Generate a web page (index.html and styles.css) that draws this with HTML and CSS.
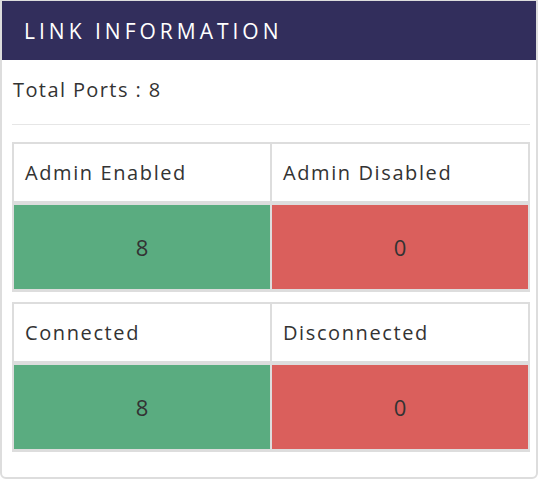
FILE: index.html
```html
<!DOCTYPE html>
<html>
<head>
<meta charset="utf-8">
<link rel="stylesheet" href="styles.css">
</head>
<body>
<div class="card">
  <div class="card-header">LINK INFORMATION</div>
  <div class="card-body">
    <div class="total">Total Ports : 8</div>
    <div class="stat-table">
      <div class="cell head">Admin Enabled</div>
      <div class="cell head">Admin Disabled</div>
      <div class="cell value good">8</div>
      <div class="cell value bad">0</div>
    </div>
    <div class="stat-table">
      <div class="cell head">Connected</div>
      <div class="cell head">Disconnected</div>
      <div class="cell value good">8</div>
      <div class="cell value bad">0</div>
    </div>
  </div>
</div>
</body>
</html>
```
FILE: styles.css
```css
html, body {
  margin: 0;
  padding: 0;
  background: #fff;
}
body {
  font-family: "Open Sans", "Liberation Sans", sans-serif;
  color: #333;
}
.card {
  box-sizing: border-box;
  width: 538px;
  height: 479px;
  border: 2px solid #dddddd;
  border-top-width: 1px;
  border-radius: 0 0 6px 6px;
  background: #fff;
}
.card-header {
  height: 59px;
  background: #322e5c;
  color: #fff;
  display: flex;
  align-items: center;
  padding-left: 22px;
  font-size: 21px;
  letter-spacing: 4px;
}
.card-body {
  padding: 0 6px 0 10px;
}
.total {
  height: 65px;
  box-sizing: border-box;
  border-bottom: 1px solid #e6e6e6;
  display: flex;
  align-items: center;
  padding-left: 1px;
  padding-bottom: 6px;
  font-size: 20px;
  letter-spacing: 1.4px;
  margin-bottom: 17px;
}
.stat-table {
  width: 518px;
  box-sizing: border-box;
  display: grid;
  grid-template-columns: 1fr 1fr;
  grid-template-rows: 57px 84px;
  column-gap: 2px;
  row-gap: 4px;
  padding: 2px 2px 3px;
  background: #dddddd;
  margin-bottom: 10px;
}
.cell {
  display: flex;
  align-items: center;
}
.head {
  background: #fff;
  padding-left: 11px;
  font-size: 20px;
  letter-spacing: 1.6px;
}
.value {
  justify-content: center;
  font-size: 22px;
}
.good { background: #5aac80; }
.bad { background: #da5f5c; }
```
